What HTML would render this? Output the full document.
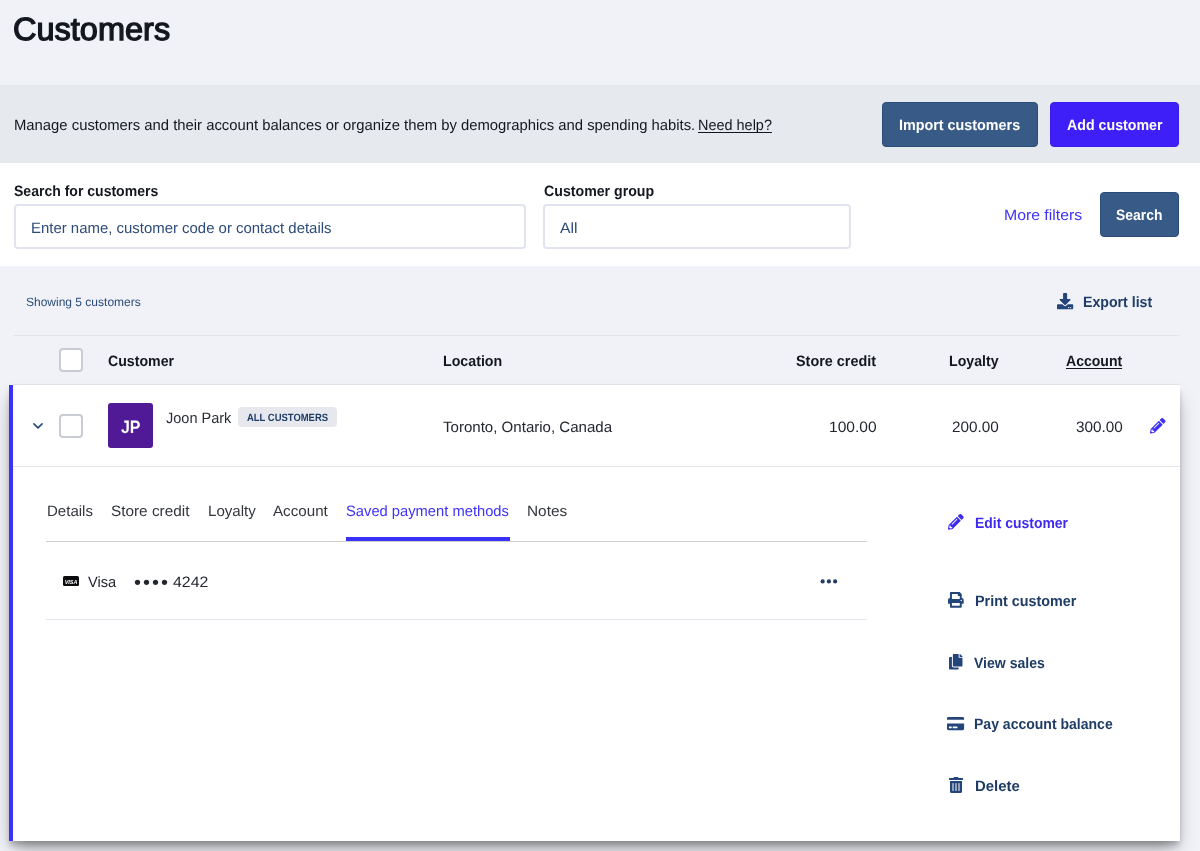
<!DOCTYPE html>
<html lang="en">
<head>
<meta charset="utf-8">
<title>Customers</title>
<style>
*{box-sizing:border-box;margin:0;padding:0}
html,body{width:1200px;height:851px;overflow:hidden}
body{background:#f0f2f8;font-family:"Liberation Sans",sans-serif;color:#14171f;position:relative}
.x{position:absolute;white-space:nowrap;line-height:1;transform-origin:0 0;text-rendering:geometricPrecision}
.b{position:absolute}
.btn{position:absolute;border-radius:4px;background:#375a86;border:1px solid #2b4d7a}
.inp{position:absolute;height:45px;border:2px solid #e1e4ee;border-radius:4px;background:#fff}
.cb{position:absolute;width:24px;height:24px;border:2px solid #c9ccd2;border-radius:4px;background:#fff}
.hl{position:absolute;height:1px;background:#e3e5eb}
svg{position:absolute;overflow:visible}
</style>
</head>
<body>
<div id="w" style="position:absolute;left:0;top:0;width:1200px;height:851px;will-change:transform">
<div class="b" style="left:0;top:85px;width:1200px;height:78px;background:#e6eaee"></div>
<div class="b" style="left:0;top:163px;width:1200px;height:103px;background:#fff"></div>

<div class="btn" style="left:882px;top:102px;width:156px;height:45px"></div>
<div class="btn" style="left:1050px;top:102px;width:129px;height:45px;background:#3f1ff7;border-color:#3a1aec"></div>
<div class="btn" style="left:1100px;top:192px;width:79px;height:45px"></div>

<div class="inp" style="left:13.5px;top:204px;width:512.5px"></div>
<div class="inp" style="left:543px;top:204px;width:308px"></div>

<div class="hl" style="left:13px;top:335px;width:1167px"></div>
<div class="hl" style="left:13px;top:384px;width:1167px"></div>
<div class="cb" style="left:59px;top:348px"></div>

<div class="b" style="left:9px;top:385px;width:1171px;height:456px;background:#fff;border-left:4px solid #3b32fa;box-shadow:0 11px 18px -4px rgba(0,0,0,.36),0 5px 6px -1px rgba(0,0,0,.22)"></div>
<div class="cb" style="left:59px;top:414px"></div>
<div class="b" style="left:108px;top:403px;width:45px;height:45px;border-radius:3px;background:#501996"></div>
<div class="b" style="left:238px;top:407px;width:99px;height:20px;border-radius:4px;background:#e6e8ee"></div>
<div class="hl" style="left:13px;top:466px;width:1167px"></div>

<div class="hl" style="left:46px;top:541px;width:821px;background:#cdcfd5"></div>
<div class="b" style="left:346px;top:537px;width:164px;height:4px;background:#3b32fa"></div>
<div class="hl" style="left:46px;top:619px;width:821px;background:#e3e5ec"></div>

<h1 class="x" style="left:13.40px;top:13px;font-size:32px;font-weight:400;-webkit-text-stroke:1.3px;color:#14171f;transform:scaleX(1.0161);">Customers</h1>
<div class="x" style="left:14.00px;top:118px;font-size:15px;font-weight:400;color:#14171f;transform:scaleX(0.9891);">Manage customers and their account balances or organize them by demographics and spending habits.</div>
<div class="x" style="left:698.30px;top:118px;font-size:15px;font-weight:400;color:#14171f;transform:scaleX(0.9636);text-decoration:underline;text-underline-offset:2px;text-decoration-skip-ink:none">Need help?</div>
<div class="x" style="left:898.80px;top:118px;font-size:15px;font-weight:700;color:#fff;transform:scaleX(0.9559);">Import customers</div>
<div class="x" style="left:1066.80px;top:118px;font-size:15px;font-weight:700;color:#fff;transform:scaleX(0.9475);">Add customer</div>
<div class="x" style="left:14.00px;top:184px;font-size:15px;font-weight:700;color:#14171f;transform:scaleX(0.9351);">Search for customers</div>
<div class="x" style="left:30.80px;top:221px;font-size:15px;font-weight:400;color:#2c4b78;transform:scaleX(0.9957);">Enter name, customer code or contact details</div>
<div class="x" style="left:543.50px;top:184px;font-size:15px;font-weight:700;color:#14171f;transform:scaleX(0.9444);">Customer group</div>
<div class="x" style="left:559.70px;top:221px;font-size:15px;font-weight:400;color:#2c4b78;transform:scaleX(1.0471);">All</div>
<div class="x" style="left:1004.40px;top:208px;font-size:15px;font-weight:400;color:#3f32f5;transform:scaleX(1.0527);">More filters</div>
<div class="x" style="left:1116.00px;top:208px;font-size:15px;font-weight:700;color:#fff;transform:scaleX(0.9280);">Search</div>
<div class="x" style="left:26.00px;top:296px;font-size:12px;font-weight:400;color:#2c4b78;transform:scaleX(1.0000);">Showing 5 customers</div>
<div class="x" style="left:1083.00px;top:295px;font-size:15px;font-weight:700;color:#1f3c66;transform:scaleX(0.9432);">Export list</div>
<div class="x" style="left:108.00px;top:354px;font-size:15px;font-weight:700;color:#14171f;transform:scaleX(0.9437);">Customer</div>
<div class="x" style="left:443.30px;top:354px;font-size:15px;font-weight:700;color:#14171f;transform:scaleX(0.9468);">Location</div>
<div class="x" style="left:795.70px;top:354px;font-size:15px;font-weight:700;color:#14171f;transform:scaleX(0.9595);">Store credit</div>
<div class="x" style="left:949.30px;top:354px;font-size:15px;font-weight:700;color:#14171f;transform:scaleX(0.9434);">Loyalty</div>
<div class="x" style="left:1065.60px;top:354px;font-size:15px;font-weight:700;color:#14171f;transform:scaleX(0.9361);text-decoration:underline;text-underline-offset:2px;text-decoration-skip-ink:none">Account</div>
<div class="x" style="left:121.00px;top:418px;font-size:18px;font-weight:700;color:#fff;transform:scaleX(0.8864);">JP</div>
<div class="x" style="left:165.50px;top:411px;font-size:15px;font-weight:400;color:#2a2d35;transform:scaleX(0.9676);">Joon Park</div>
<div class="x" style="left:247.00px;top:413px;font-size:10.5px;font-weight:700;color:#1f3c66;transform:scaleX(0.9000);">ALL CUSTOMERS</div>
<div class="x" style="left:443.30px;top:420px;font-size:15px;font-weight:400;color:#23262e;transform:scaleX(1.0041);">Toronto, Ontario, Canada</div>
<div class="x" style="left:828.96px;top:420px;font-size:15px;font-weight:400;color:#23262e;transform:scaleX(1.0378);">100.00</div>
<div class="x" style="left:952.30px;top:420px;font-size:15px;font-weight:400;color:#23262e;transform:scaleX(1.0217);">200.00</div>
<div class="x" style="left:1075.70px;top:420px;font-size:15px;font-weight:400;color:#23262e;transform:scaleX(1.0217);">300.00</div>
<div class="x" style="left:47.20px;top:504px;font-size:15px;font-weight:400;color:#33363d;transform:scaleX(1.0022);">Details</div>
<div class="x" style="left:111.30px;top:504px;font-size:15px;font-weight:400;color:#33363d;transform:scaleX(1.0221);">Store credit</div>
<div class="x" style="left:208.00px;top:504px;font-size:15px;font-weight:400;color:#33363d;transform:scaleX(1.0063);">Loyalty</div>
<div class="x" style="left:273.30px;top:504px;font-size:15px;font-weight:400;color:#33363d;transform:scaleX(1.0109);">Account</div>
<div class="x" style="left:346.40px;top:504px;font-size:15px;font-weight:400;color:#3f32f5;transform:scaleX(0.9819);">Saved payment methods</div>
<div class="x" style="left:526.90px;top:504px;font-size:15px;font-weight:400;color:#33363d;transform:scaleX(1.0256);">Notes</div>
<div class="x" style="left:87.50px;top:575px;font-size:15px;font-weight:400;color:#23262e;transform:scaleX(0.9759);">Visa</div>
<div class="x" style="left:172.50px;top:575px;font-size:15px;font-weight:400;color:#23262e;transform:scaleX(1.0606);">4242</div>
<div class="x" style="left:974.70px;top:516px;font-size:15px;font-weight:700;color:#3f2bf0;transform:scaleX(0.9297);">Edit customer</div>
<div class="x" style="left:974.50px;top:594px;font-size:15px;font-weight:700;color:#1f3c66;transform:scaleX(0.9575);">Print customer</div>
<div class="x" style="left:974.40px;top:656px;font-size:15px;font-weight:700;color:#1f3c66;transform:scaleX(0.9368);">View sales</div>
<div class="x" style="left:974.40px;top:717px;font-size:15px;font-weight:700;color:#1f3c66;transform:scaleX(0.9345);">Pay account balance</div>
<div class="x" style="left:974.60px;top:779px;font-size:15px;font-weight:700;color:#1f3c66;transform:scaleX(0.9933);">Delete</div>
<div class="x" style="left:134.1px;top:572.9px;font-size:20px;color:#23262e;letter-spacing:2.0px">••••</div>
<svg style="left:1056.9px;top:292.7px" width="16.2" height="16.2" viewBox="0 0 512 512" fill="#24457a"><path d="M216 0h80c13.3 0 24 10.700 24 24v168h87.700c17.800 0 26.700 21.500 14.100 34.100L269.700 378.300c-7.500 7.500-19.800 7.500-27.300 0L90.100 226.100c-12.600-12.600-3.700-34.100 14.100-34.100H192V24c0-13.300 10.700-24 24-24zm296 376v112c0 13.300-10.700 24-24 24H24c-13.300 0-24-10.700-24-24V376c0-13.300 10.700-24 24-24h146.700l49 49c20.100 20.100 52.500 20.100 72.600 0l49-49H488c13.300 0 24 10.700 24 24zm-124 88c0-11-9-20-20-20s-20 9-20 20 9 20 20 20 20-9 20-20zm64 0c0-11-9-20-20-20s-20 9-20 20 9 20 20 20 20-9 20-20z"/></svg>
<svg style="left:32px;top:421px" width="12" height="10" viewBox="0 0 12 10" fill="none" stroke="#234a78" stroke-width="1.6" stroke-linecap="round" stroke-linejoin="round"><path d="M1.900 2.900L6 6.900L10.100 2.900"/></svg>
<svg style="left:1149.5px;top:417.700px" width="15.500" height="15.500" viewBox="0 0 512 512" fill="#3f32f5"><path d="M497.900 142.100l-46.100 46.100c-4.700 4.700-12.300 4.700-17 0l-111-111c-4.700-4.700-4.700-12.300 0-17l46.100-46.100c18.700-18.700 49.100-18.700 67.900 0l60.100 60.100c18.800 18.700 18.800 49.100 0 67.900zM284.200 99.800L21.600 362.400.4 483.900c-2.900 16.400 11.400 30.600 27.800 27.800l121.500-21.300 262.600-262.600c4.700-4.700 4.700-12.300 0-17l-111-111c-4.800-4.700-12.400-4.700-17.100 0zM124.100 339.900c-5.500-5.500-5.500-14.300 0-19.800l154-154c5.500-5.500 14.300-5.500 19.800 0s5.500 14.300 0 19.800l-154 154c-5.500 5.500-14.300 5.500-19.800 0zM88 424h48v36.300l-64.500 11.300-31.100-31.100L51.700 376H88v48z"/></svg>
<svg style="left:947.5px;top:514.300px" width="15.700" height="15.700" viewBox="0 0 512 512" fill="#3f2bf0"><path d="M497.900 142.100l-46.100 46.100c-4.700 4.700-12.300 4.700-17 0l-111-111c-4.700-4.700-4.700-12.300 0-17l46.100-46.100c18.700-18.700 49.100-18.700 67.900 0l60.100 60.100c18.800 18.700 18.800 49.100 0 67.900zM284.200 99.800L21.600 362.400.4 483.900c-2.900 16.400 11.400 30.600 27.800 27.800l121.500-21.300 262.600-262.600c4.700-4.700 4.700-12.300 0-17l-111-111c-4.800-4.700-12.400-4.700-17.100 0zM124.100 339.900c-5.500-5.500-5.500-14.300 0-19.800l154-154c5.500-5.500 14.300-5.500 19.800 0s5.500 14.300 0 19.800l-154 154c-5.500 5.500-14.300 5.500-19.800 0zM88 424h48v36.300l-64.500 11.300-31.100-31.100L51.700 376H88v48z"/></svg>
<svg style="left:947.5px;top:592.2px" width="15.700" height="15.900" viewBox="0 0 512 512" fill="#24457a"><path d="M448 192V77.250c0-8.490-3.370-16.620-9.370-22.630L393.370 9.370c-6-6-14.140-9.370-22.630-9.370H96C78.330 0 64 14.330 64 32v160c-35.350 0-64 28.650-64 64v112c0 8.840 7.160 16 16 16h48v96c0 17.670 14.330 32 32 32h320c17.670 0 32-14.330 32-32v-96h48c8.840 0 16-7.160 16-16V256c0-35.350-28.650-64-64-64zm-64 256H128v-96h256v96zm0-224H128V64h192v48c0 8.840 7.160 16 16 16h48v96zm48 72c-13.250 0-24-10.750-24-24 0-13.260 10.750-24 24-24s24 10.740 24 24c0 13.250-10.750 24-24 24z"/></svg>
<svg style="left:948.5px;top:654px" width="13.500" height="15.400" viewBox="0 0 448 512" fill="#24457a"><path d="M320 448v40c0 13.255-10.745 24-24 24H24c-13.255 0-24-10.745-24-24V120c0-13.255 10.745-24 24-24h72v296c0 30.879 25.121 56 56 56h168zm0-344V0H152c-13.255 0-24 10.745-24 24v368c0 13.255 10.745 24 24 24h272c13.255 0 24-10.745 24-24V128H344c-13.200 0-24-10.800-24-24zm120.971-31.029L375.029 7.029A24 24 0 0 0 358.059 0H352v96h96v-6.059a24 24 0 0 0-7.029-16.970z"/></svg>
<svg style="left:947px;top:715.800px" width="17.100" height="15.200" viewBox="0 0 576 512" fill="#24457a"><path d="M0 432c0 26.500 21.500 48 48 48h480c26.500 0 48-21.500 48-48V256H0v176zm192-68c0-6.600 5.400-12 12-12h136c6.600 0 12 5.400 12 12v40c0 6.600-5.400 12-12 12H204c-6.600 0-12-5.400-12-12v-40zm-128 0c0-6.600 5.400-12 12-12h72c6.600 0 12 5.400 12 12v40c0 6.600-5.400 12-12 12H76c-6.600 0-12-5.400-12-12v-40zM576 80v48H0V80c0-26.500 21.500-48 48-48h480c26.500 0 48 21.500 48 48z"/></svg>
<svg style="left:948.5px;top:776.9px" width="14" height="16" viewBox="0 0 448 512" fill="#24457a"><path d="M32 464a48 48 0 0 0 48 48h288a48 48 0 0 0 48-48V128H32zm272-256a16 16 0 0 1 32 0v224a16 16 0 0 1-32 0zm-96 0a16 16 0 0 1 32 0v224a16 16 0 0 1-32 0zm-96 0a16 16 0 0 1 32 0v224a16 16 0 0 1-32 0zM432 32H312l-9.400-18.700A24 24 0 0 0 281.100 0H166.800a23.720 23.720 0 0 0-21.400 13.300L136 32H16A16 16 0 0 0 0 48v32a16 16 0 0 0 16 16h416a16 16 0 0 0 16-16V48a16 16 0 0 0-16-16z"/></svg>
<svg style="left:818px;top:576px" width="22" height="11" viewBox="0 0 22 11" fill="#1f3c66"><circle cx="4.65" cy="5.4" r="2.1"/><circle cx="10.9" cy="5.4" r="2.1"/><circle cx="17.15" cy="5.4" r="2.1"/></svg>
<svg style="left:62.9px;top:576px" width="16" height="10" viewBox="0 0 16 10"><rect width="16" height="10" rx="1.5" fill="#0b0b0e"/><text x="1.7" y="7.5" font-family="Liberation Sans, sans-serif" font-size="6.2" font-weight="700" font-style="italic" fill="#fff" textLength="12.8" lengthAdjust="spacingAndGlyphs">VISA</text></svg>

</div>
</body>
</html>
